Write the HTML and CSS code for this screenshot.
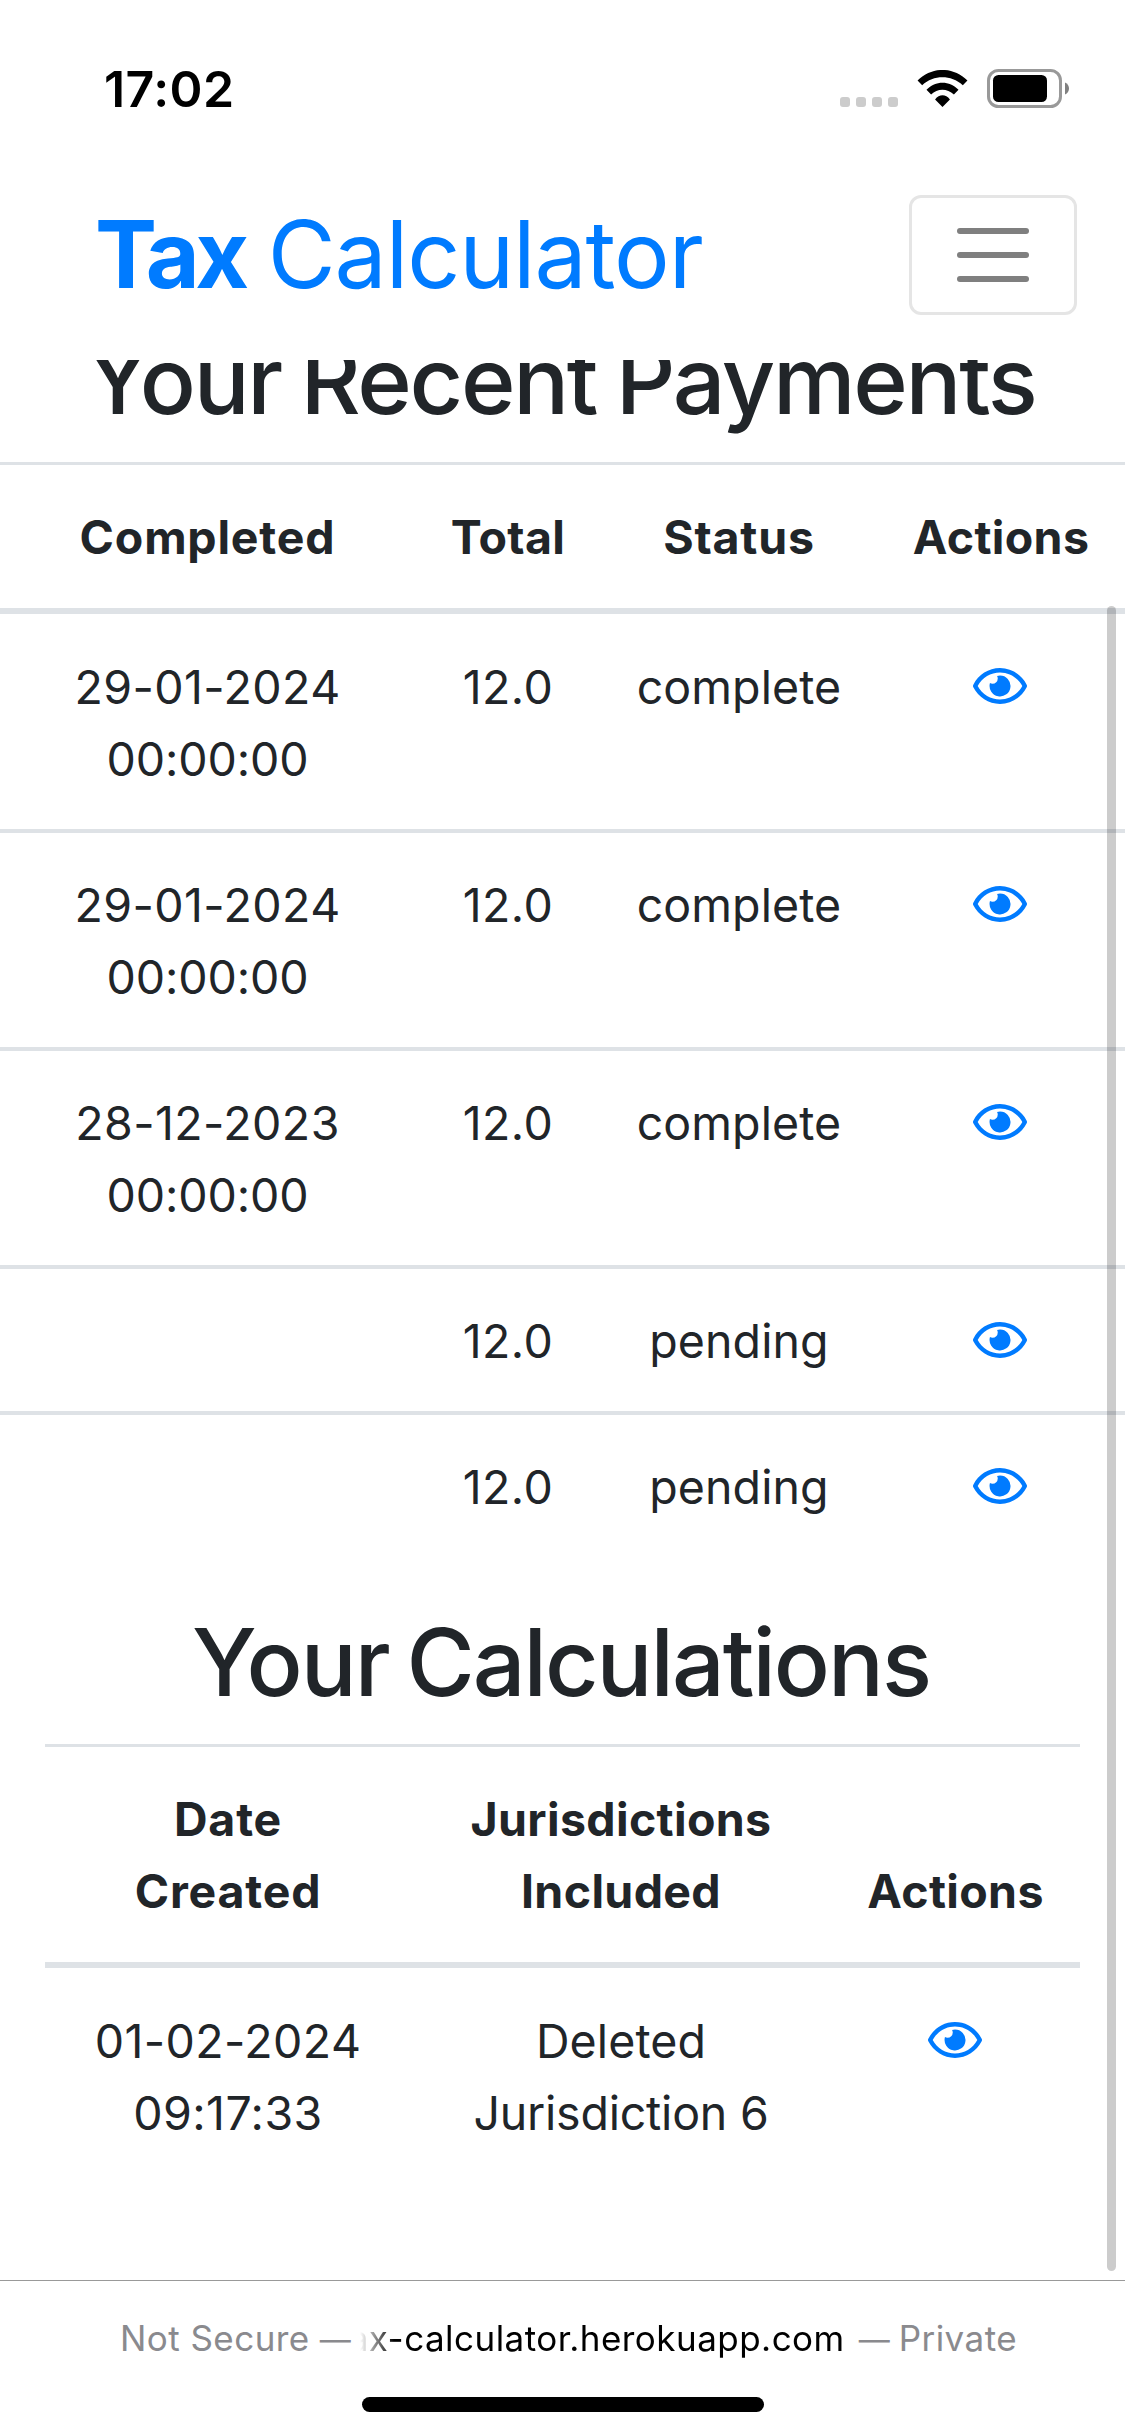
FILE: index.html
```
<!DOCTYPE html>
<html lang="en">
<head>
<meta charset="utf-8">
<title>Tax Calculator</title>
<link rel="stylesheet" href="styles.css">
</head>
<body>
<svg class="sprite" aria-hidden="true">
  <symbol id="eye" viewBox="0 0 576 512"><path d="M288 144a110.94 110.94 0 0 0-31.24 5 55.4 55.4 0 0 1 7.24 27 56 56 0 0 1-56 56 55.4 55.4 0 0 1-27-7.24A111.71 111.71 0 1 0 288 144zm284.52 97.4C518.29 135.59 410.93 64 288 64S57.68 135.64 3.48 241.41a32.35 32.35 0 0 0 0 29.19C57.71 376.41 165.07 448 288 448s230.32-71.64 284.52-177.41a32.35 32.35 0 0 0 0-29.19zM288 400c-98.65 0-189.09-55-237.93-144C98.91 167 189.34 112 288 112s189.09 55 237.93 144C477.1 345 386.66 400 288 400z"/></symbol>
</svg>

<header class="top">
  <div class="status-bar">
    <span class="clock">17:02</span>
    <div class="indicators">
      <div class="dots"><i></i><i></i><i></i><i></i></div>
      <svg class="wifi" viewBox="262 60 151 112"><path d="M262 92C305 49 370 49 413 92L399 106C363 74 311 74 276 106ZM289 120C316 91 359 91 386 120L372 134C352 115 322 115 303 134ZM315 149C328 132 347 132 360 149L337.5 172Z"/></svg>
      <svg class="battery" viewBox="0 0 82 39"><rect x="1.5" y="1.5" width="72" height="36" rx="10" fill="none" stroke="#999" stroke-width="3"/><rect x="6" y="6" width="54" height="27" rx="5.5"/><path d="M78 13.500C80.700 14.500 82 17 82 19.500S80.700 24.500 78 25.500Z" fill="#808080"/></svg>
    </div>
  </div>
  <nav class="navbar">
    <a class="brand"><b>Tax</b> Calculator</a>
    <button class="toggler" aria-label="Menu"><i></i><i></i><i></i></button>
  </nav>
</header>

<main class="page">
  <h1 class="title title-payments">Your Recent Payments</h1>
  <table class="table payments">
    <colgroup><col class="c-completed"><col class="c-total"><col class="c-status"><col></colgroup>
    <thead><tr><th class="wide">Completed</th><th>Total</th><th class="wide">Status</th><th>Actions</th></tr></thead>
    <tbody>
      <tr><td>29-01-2024<br><span class="time">00:00:00</span></td><td>12.0</td><td class="tight">complete</td><td><svg class="eye"><use href="#eye"/></svg></td></tr>
      <tr><td>29-01-2024<br><span class="time">00:00:00</span></td><td>12.0</td><td class="tight">complete</td><td><svg class="eye"><use href="#eye"/></svg></td></tr>
      <tr><td>28-12-2023<br><span class="time">00:00:00</span></td><td>12.0</td><td class="tight">complete</td><td><svg class="eye"><use href="#eye"/></svg></td></tr>
      <tr><td></td><td>12.0</td><td class="tight">pending</td><td><svg class="eye"><use href="#eye"/></svg></td></tr>
      <tr><td></td><td>12.0</td><td class="tight">pending</td><td><svg class="eye"><use href="#eye"/></svg></td></tr>
    </tbody>
  </table>

  <h1 class="title title-calculations">Your Calculations</h1>
  <table class="table calculations">
    <colgroup><col class="c-date"><col class="c-included"><col></colgroup>
    <thead><tr><th class="wide">Date<br>Created</th><th>Jurisdictions<br>Included</th><th>Actions</th></tr></thead>
    <tbody>
      <tr><td>01-02-2024<br>09:17:33</td><td><span class="tight">Deleted</span><br><span class="narrow">Jurisdiction 6</span></td><td><svg class="eye"><use href="#eye"/></svg></td></tr>
    </tbody>
  </table>
  <div class="scrollbar"></div>
</main>

<footer class="bottom">
  <div class="address">
    <span class="note">Not Secure</span>
    <span class="dash">—</span>
    <span class="host">tax-calculator.herokuapp.com</span>
    <span class="dash dash-end">—</span>
    <span class="note">Private</span>
  </div>
  <div class="home-indicator"></div>
</footer>
</body>
</html>
```
FILE: styles.css
```
* { box-sizing: border-box; }

body {
  margin: 0;
  width: 1125px;
  height: 2436px;
  display: flex;
  flex-direction: column;
  overflow: hidden;
  background: #fff;
  color: #212529;
  font: 400 46.5px/72px Inter, "Liberation Sans", sans-serif;
}

.sprite { display: none; }

/* Status bar and navigation */
.top { height: 360px; flex: none; }

.status-bar {
  display: flex;
  justify-content: space-between;
  height: 183px;
  padding: 59px 56px 0 104px;
}

.clock {
  color: #000;
  font-size: 50px;
  font-weight: 600;
  line-height: 60px;
  letter-spacing: 0.45px;
}

.indicators { display: flex; align-items: flex-end; height: 48px; }
.dots { display: flex; gap: 6px; margin-right: 19px; }
.dots i { width: 10px; height: 10px; border-radius: 3px; background: #ccc; }
.wifi { width: 51px; height: 37px; margin-right: 19px; }
.battery { width: 82px; height: 39px; margin-bottom: -1px; }

.navbar {
  display: flex;
  align-items: center;
  justify-content: space-between;
  height: 144px;
  padding: 0 48px 0 95px;
}

.brand {
  margin-bottom: 2px;
  color: #007bff;
  font-size: 93px;
  line-height: 142px;
  letter-spacing: -1.1px;
  white-space: nowrap;
}
.brand b { margin-right: -2px; font-weight: 700; letter-spacing: -4.5px; }

.toggler {
  display: flex;
  flex-direction: column;
  align-items: center;
  justify-content: center;
  gap: 18px;
  width: 168px;
  height: 120px;
  padding: 0;
  border: 3px solid #e5e5e5;
  border-radius: 12px;
  background: none;
}
.toggler i { width: 72px; height: 6px; border-radius: 3px; background: #7f7f7f; }

/* Scrolled page content */
.page { position: relative; height: 1920px; flex: none; overflow: hidden; }

.title {
  margin: 0 0 24px;
  font-size: 93px;
  font-weight: 500;
  line-height: 115px;
  text-align: center;
  white-space: nowrap;
}
.title-payments {
  margin-top: -37px;
  padding-right: 4px;
  letter-spacing: -2.3px;
  word-spacing: -3px;
}
.title-calculations {
  padding-right: 3px;
  letter-spacing: -2px;
  word-spacing: -5px;
}

.table {
  table-layout: fixed;
  border-spacing: 0;
  text-align: center;
}
.table th, .table td { padding: 0; vertical-align: top; }

.table th {
  padding: 36px 0 35px;
  border-top: 3px solid #dee2e6;
  border-bottom: 6px solid #dee2e6;
  font-weight: 700;
  letter-spacing: 0.35px;
  vertical-align: bottom;
}

.table td {
  padding: 36px 0 34px;
  border-top: 4px solid #dee2e6;
  letter-spacing: 0.42px;
}
.table tbody tr:first-child td { padding-top: 37px; border-top: 0; }

.table .wide { letter-spacing: 0.8px; }
.table .tight { letter-spacing: 0.1px; }
.table .time { letter-spacing: -0.07px; }
.table .narrow { letter-spacing: -0.21px; }

.payments { width: 1125px; margin-bottom: 48px; }
.c-completed { width: 415px; }
.c-total { width: 186px; }
.c-status { width: 276px; }

.calculations { width: 1035px; margin: 0 45px; }
.c-date { width: 366px; }
.c-included { width: 420px; }

.eye {
  display: block;
  width: 54px;
  height: 48px;
  margin: 11px auto 0;
  border-right: 0 solid transparent;
  fill: #007bff;
}
.table td:last-child { padding-right: 2px; }

.scrollbar {
  position: absolute;
  top: 246px;
  right: 9px;
  width: 9px;
  height: 1665px;
  border-radius: 5px;
  background: rgba(0, 0, 0, 0.2);
}

/* Collapsed browser toolbar */
.bottom { height: 156px; flex: none; border-top: 1px solid #999; }

.address {
  display: flex;
  align-items: baseline;
  height: 44px;
  margin: 35px 0 37px;
  padding-left: 120px;
  font-size: 35px;
  line-height: 44px;
  white-space: nowrap;
}
.note { color: #8a8a8e; letter-spacing: 0.45px; }
.dash { margin-left: 10px; color: #8a8a8e; font-size: 31px; }
.dash-end { margin: 0 9px 0 14px; }

/* The start of a long host name fades out at the left edge */
.host {
  display: flex;
  justify-content: flex-end;
  width: 485px;
  margin-left: 9px;
  overflow: hidden;
  color: #000;
  letter-spacing: 0.47px;
  -webkit-mask-image: linear-gradient(90deg, transparent, #000 34px);
  mask-image: linear-gradient(90deg, transparent, #000 34px);
}

.home-indicator {
  width: 402px;
  height: 15px;
  margin: 0 auto;
  border-radius: 8px;
  background: #000;
}
```
